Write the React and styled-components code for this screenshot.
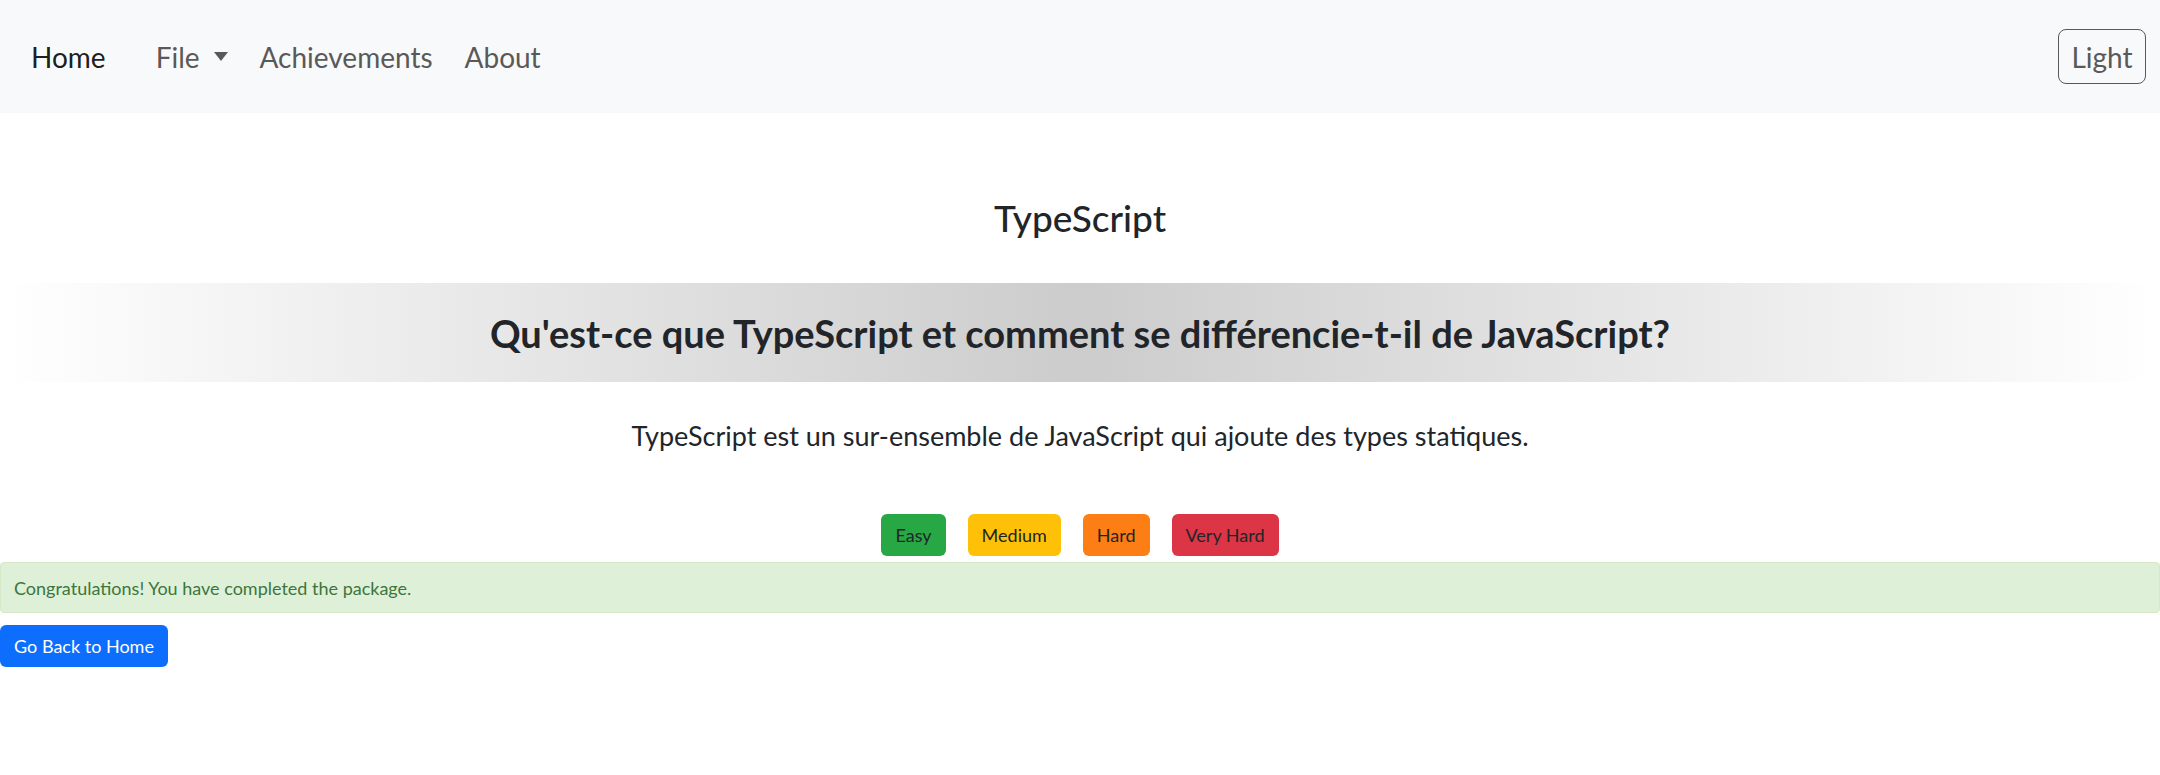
import React from 'react'
import styled, { createGlobalStyle } from 'styled-components'

const GlobalStyle = createGlobalStyle`
  body {
    margin: 0;
    background: #ffffff;
    font-family: Lato, "Open Sans", sans-serif;
    color: #212529;
  }
`

const NavBar = styled.nav`
  height: 113px;
  background: #f8f9fa;
  display: flex;
  align-items: center;
  padding: 0 14px 0 31px;
`

const Brand = styled.a`
  font-size: 28px;
  color: rgba(0, 0, 0, 0.9);
  margin-right: 34px;
  text-decoration: none;
`

const NavLinks = styled.div`
  display: flex;
  align-items: center;
  flex: 1;
`

const NavLink = styled.a`
  font-size: 28px;
  color: #595959;
  padding: 0 16px;
  display: flex;
  align-items: center;
  text-decoration: none;
`

const Caret = styled.span`
  display: inline-block;
  margin-left: 14px;
  border-top: 9px solid #595959;
  border-left: 7.5px solid transparent;
  border-right: 7.5px solid transparent;
`

const ThemeButton = styled.button`
  font-family: inherit;
  font-size: 28px;
  color: #595959;
  background: transparent;
  border: 1.5px solid #595959;
  border-radius: 8px;
  width: 88px;
  height: 55px;
`

const Main = styled.main`
  display: flex;
  flex-direction: column;
  align-items: center;
`

const Title = styled.h2`
  font-size: 37px;
  font-weight: 500;
  line-height: 44px;
  margin: 83px 0 43px;
`

const QuestionBand = styled.div`
  align-self: stretch;
  height: 99px;
  display: flex;
  align-items: center;
  justify-content: center;
  background: linear-gradient(to right, #ffffff 0%, #cccccc 50%, #ffffff 100%);
`

const Question = styled.h3`
  margin: 0;
  font-size: 38px;
  font-weight: 700;
`

const Answer = styled.p`
  font-size: 27px;
  line-height: 39px;
  margin: 34px 0 0;
`

const Levels = styled.div`
  display: flex;
  gap: 22px;
  margin-top: 59px;
`

const LevelButton = styled.button`
  font-family: inherit;
  font-size: 18px;
  color: #212529;
  background: ${p => p.$bg};
  border: none;
  border-radius: 6px;
  height: 42px;
  padding: 0 14px;
`

const Alert = styled.div`
  align-self: stretch;
  margin-top: 6px;
  height: 51px;
  box-sizing: border-box;
  display: flex;
  align-items: center;
  padding: 0 13px;
  background: #dff0d8;
  border: 1px solid #d6e9c6;
  border-radius: 4px;
  color: #3c763d;
  font-size: 18px;
`

const HomeButton = styled.button`
  align-self: flex-start;
  margin-top: 12px;
  height: 42px;
  width: 168px;
  font-family: inherit;
  font-size: 18px;
  color: #ffffff;
  background: #0d6efd;
  border: none;
  border-radius: 6px;
`

const levels = [
  { label: 'Easy', bg: '#28a745' },
  { label: 'Medium', bg: '#ffc107' },
  { label: 'Hard', bg: '#fd7e14' },
  { label: 'Very Hard', bg: '#dc3545' },
]

export default function App() {
  return (
    <>
      <GlobalStyle />
      <NavBar>
        <Brand href="#">Home</Brand>
        <NavLinks>
          <NavLink href="#">File<Caret /></NavLink>
          <NavLink href="#">Achievements</NavLink>
          <NavLink href="#">About</NavLink>
        </NavLinks>
        <ThemeButton>Light</ThemeButton>
      </NavBar>
      <Main>
        <Title>TypeScript</Title>
        <QuestionBand>
          <Question>Qu'est-ce que TypeScript et comment se différencie-t-il de JavaScript?</Question>
        </QuestionBand>
        <Answer>TypeScript est un sur-ensemble de JavaScript qui ajoute des types statiques.</Answer>
        <Levels>
          {levels.map(l => (
            <LevelButton key={l.label} $bg={l.bg}>{l.label}</LevelButton>
          ))}
        </Levels>
        <Alert>Congratulations! You have completed the package.</Alert>
        <HomeButton>Go Back to Home</HomeButton>
      </Main>
    </>
  )
}
